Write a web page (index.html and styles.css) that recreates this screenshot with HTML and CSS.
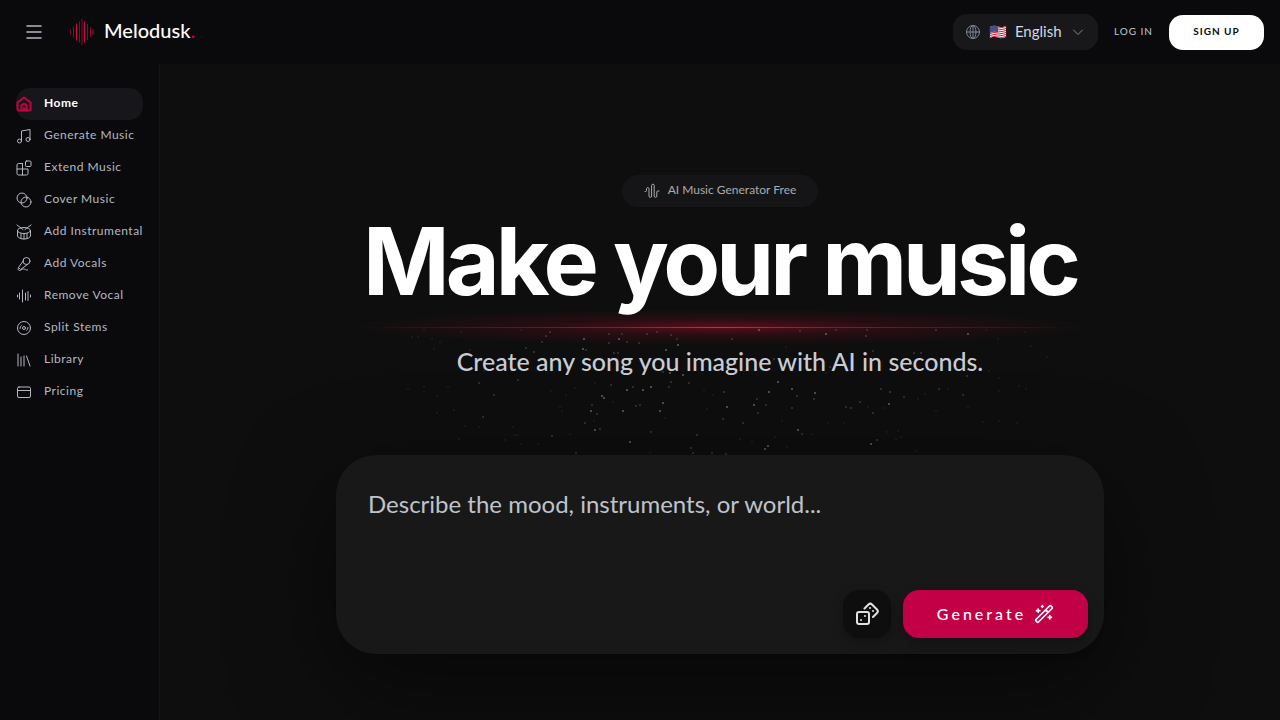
FILE: index.html
```html
<!DOCTYPE html>
<html lang="en">
<head>
    <meta charset="utf-8">
    <meta name="viewport" content="width=device-width, initial-scale=1">
    <title>Melodusk</title>
    <link rel="stylesheet" href="styles.css">
</head>
<body>
<header class="topbar">
    <button class="menu-btn" type="button" aria-label="Menu">
        <svg width="20" height="20" viewBox="0 0 20 20"><path d="M3 4h14M3 10h14M3 16h14"/></svg>
    </button>
    <a class="brand" href="#">
        <svg class="brand-mark" width="24" height="28" viewBox="0 0 24 28">
            <path class="dim" d="M.5 11.5v5M3.500 8.500v11M9.500 3.500v21M12 1v26M17.500 6v16M20.500 9v10"/>
            <path d="M6.500 5.500v17M14.500 3.500v21M23 11.500v5"/>
        </svg>
        <span class="brand-name">Melodusk<span class="dot">.</span></span>
    </a>
    <div class="account">
        <button class="lang" type="button">
            <svg class="globe" width="16" height="16" viewBox="0 0 16 16"><circle cx="8" cy="8" r="6.500"/><ellipse cx="8" cy="8" rx="3" ry="6.500"/><path d="M1.500 8h13M8 1.500v13"/></svg>
            <svg class="flag" width="18" height="14" viewBox="0 0 18 14">
                <path fill="#eee" d="M1 2q4-2 8-.5t8-.5v11q-4 2-8 .5t-8 .5z"/>
                <path fill="none" stroke="#d22f3d" d="M1 2.500q4-2 8-.5t8-.5M1 4.500q4-2 8-.5t8-.5M1 6.500q4-2 8-.5t8-.5M1 8.500q4-2 8-.5t8-.5M1 10.500q4-2 8-.5t8-.5M1 12.500q4-2 8-.5t8-.5"/>
                <path fill="#45508c" d="M1 2q4-2 8-.5v6q-4-1.500-8 .5z"/>
            </svg>
            <span>English</span>
            <svg class="chevron" width="16" height="16" viewBox="0 0 16 16"><path d="M3.500 6l4.500 4.500L12.500 6"/></svg>
        </button>
        <a class="login" href="#">LOG IN</a>
        <button class="signup" type="button">SIGN UP</button>
    </div>
</header>

<div class="shell">
    <nav class="sidebar">
        <a class="item active" href="#">
            <svg viewBox="0 0 16 16"><path d="M1.500 6.500L8 1.500l6.500 5v6a2 2 0 0 1-2 2h-9a2 2 0 0 1-2-2zM5.500 14.500V10A2.500 2.500 0 0 1 8 8a2.500 2.500 0 0 1 2.500 2v4.500M8 12v2.500"/></svg>
            <span>Home</span>
        </a>
        <a class="item" href="#">
            <svg viewBox="0 0 16 16"><circle cx="3.500" cy="13" r="2"/><circle cx="12" cy="11.500" r="2"/><path d="M5.500 13V3l8.500-1.500v10"/></svg>
            <span>Generate Music</span>
        </a>
        <a class="item" href="#">
            <svg viewBox="0 0 16 16"><path d="M6.500 3.500h-4a1.500 1.500 0 0 0-1.500 1.500v8.500A1.500 1.500 0 0 0 2.500 15h8a1.500 1.500 0 0 0 1.500-1.500V9H1M6.500 3.500V15"/><rect x="9.500" y="1" width="5.500" height="5.500" rx="1"/></svg>
            <span>Extend Music</span>
        </a>
        <a class="item" href="#">
            <svg viewBox="0 0 16 16"><circle cx="6" cy="6" r="5"/><circle cx="10" cy="10" r="5"/></svg>
            <span>Cover Music</span>
        </a>
        <a class="item" href="#">
            <svg viewBox="0 0 16 16"><ellipse cx="8" cy="6.500" rx="6.500" ry="3"/><path d="M1.500 6.500v5.500c1 4 12 4 13 0V6.500M5 9.500v5M8 9.500V15M11 9.500v5M1 1l6 4.500M15 1L9 5.500"/></svg>
            <span>Add Instrumental</span>
        </a>
        <a class="item" href="#">
            <svg viewBox="0 0 16 16"><circle cx="10.500" cy="5" r="3.500"/><path d="M7.500 4.500l-5 7 2 2 7-5M2.500 11.500c-1 2 0 3 1 3s2-1.500 4-1.500 2 1.500 4 1"/></svg>
            <span>Add Vocals</span>
        </a>
        <a class="item" href="#">
            <svg viewBox="0 0 16 16"><path d="M1.500 7v2M3.500 5v6M6.500 2v12M9.500 5v7M12 3.500v9M14.500 7v2"/></svg>
            <span>Remove Vocal</span>
        </a>
        <a class="item" href="#">
            <svg viewBox="0 0 16 16"><circle cx="8" cy="8" r="6.500"/><circle cx="8" cy="8" r="1.500"/><path d="M4 8.500q0-2 1.500-3M12 7.500q0 2-1.500 3"/></svg>
            <span>Split Stems</span>
        </a>
        <a class="item" href="#">
            <svg viewBox="0 0 16 16"><path d="M2 2v12M5 5v9M8 4v10M10.500 4l3.500 10"/></svg>
            <span>Library</span>
        </a>
        <a class="item" href="#">
            <svg viewBox="0 0 16 16"><rect x="1.500" y="3" width="13" height="10.500" rx="1.500"/><path d="M1.500 6.500h13"/></svg>
            <span>Pricing</span>
        </a>
    </nav>

    <main class="hero">
        <div class="badge">
            <svg width="16" height="16" viewBox="0 0 16 16"><path d="M1 8.500h.5a1 1 0 0 0 1-1v-2a1.300 1.300 0 0 1 2.500 0v7.500a1.300 1.300 0 0 0 2.600 0V2.500a1.300 1.300 0 0 1 2.600 0v10.500a1.300 1.300 0 0 0 2.600 0V9a1 1 0 0 1 1-1H15"/></svg>
            <span>AI Music Generator Free</span>
        </div>
        <div class="headline">
            <h1>Make your music</h1>
            <div class="beam"></div>
            <svg class="sparkles" width="720" height="150" viewBox="0 0 720 150" aria-hidden="true">
                <path class="bright" d="M259 29h0M224 29h0M223 39h0M306 40h0M318 35h0M257 61h0M310 63h0M323 65h0M291 77h0M283 80h0M267 80h0M242 86h0M244 88h0M231 101h0M263 101h0M303 93h0M300 101h0M399 20h0M466 24h0M608 24h0M418 72h0M432 79h0M455 83h0M409 82h0M529 94h0M394 95h0M367 97h0M438 120h0M405 139h0M408 136h0M270 132h0M511 134h0M235 120h0"/>
                <path class="mid" d="M262 24h0M267 32h0M226 40h0M182 32h0M186 26h0M190 22h0M317 29h0M311 25h0M297 22h0M287 24h0M249 24h0M249 33h0M279 33h0M254 43h0M258 43h0M166 38h0M174 42h0M303 62h0M311 72h0M329 73h0M309 77h0M273 77h0M251 75h0M232 95h0M237 104h0M276 96h0M280 95h0M225 113h0M240 119h0M291 122h0M337 125h0M331 138h0M333 143h0M352 143h0M216 143h0M192 126h0M119 73h0M158 70h0M134 85h0M123 107h0M440 21h0M476 20h0M507 20h0M576 20h0M372 29h0M506 26h0M513 41h0M561 43h0M554 43h0M414 49h0M470 57h0M487 61h0M607 66h0M364 82h0M397 89h0M406 95h0M398 103h0M432 98h0M437 86h0M454 89h0M486 97h0M491 98h0M500 92h0M521 79h0M544 87h0M530 82h0M513 103h0M363 109h0M383 113h0M442 124h0M517 130h0M366 144h0M603 85h0M579 79h0"/>
                <path class="faint" d="M101 22h0M161 20h0M64 19h0M52 27h0M58 27h0M72 29h0M80 32h0M110 40h0M74 39h0M124 61h0M77 86h0M77 103h0M88 77h0M64 77h0M64 82h0M48 79h0M94 100h0M153 117h0M154 125h0M157 125h0M105 116h0M99 129h0M119 117h0M145 130h0M161 134h0M178 134h0M210 124h0M235 73h0M215 78h0M191 81h0M206 85h0M200 97h0M202 101h0M234 111h0M253 92h0M305 108h0M344 80h0M353 85h0M347 99h0M426 37h0M430 54h0M452 124h0M427 137h0M392 132h0M380 129h0M415 127h0M422 111h0M468 113h0M484 113h0M527 122h0M538 121h0M541 127h0M536 129h0M508 97h0M523 98h0M558 89h0M565 84h0M588 79h0M608 106h0M608 97h0M576 101h0M639 68h0M639 81h0M659 76h0M666 79h0M638 29h0M665 22h0M671 36h0M687 47h0M626 20h0M629 61h0M623 112h0M639 111h0M657 113h0M466 63h0M290 143h0M556 141h0"/>
            </svg>
        </div>
        <p class="tagline">Create any song you imagine with AI in seconds.</p>
        <form class="prompt">
            <textarea aria-label="Describe your song" placeholder="Describe the mood, instruments, or world..."></textarea>
            <div class="actions">
                <button class="dice" type="button" aria-label="Random idea">
                    <svg width="24" height="24" viewBox="0 0 24 24"><rect x="2" y="10" width="12" height="12" rx="2"/><path d="M9.500 6.500l4-4a2.500 2.500 0 0 1 3.500 0l5 5a2.500 2.500 0 0 1 0 3.500l-4 4M6 18h.01M10 14h.01M15 6h.01M18 9h.01"/></svg>
                </button>
                <button class="generate" type="button">
                    <span>Generate</span>
                    <svg width="20" height="20" viewBox="0 0 24 24"><path d="M21.640 3.640l-1.280-1.280a1.210 1.210 0 0 0-1.720 0L2.360 18.640a1.210 1.210 0 0 0 0 1.720l1.280 1.280a1.200 1.200 0 0 0 1.720 0L21.640 5.360a1.200 1.200 0 0 0 0-1.720M14 7l3 3M5 6v4M19 14v4M10 2v2M7 8H3M21 16h-4M11 3H9"/></svg>
                </button>
            </div>
        </form>
    </main>
</div>
</body>
</html>
```
FILE: styles.css
```css
* {
    box-sizing: border-box;
}
body {
    margin: 0;
    min-height: 100vh;
    display: flex;
    flex-direction: column;
    background: #0e0e0e;
    color: #fff;
    font-family: Lato, "Noto Sans", sans-serif;
}
a {
    color: inherit;
    text-decoration: none;
}
button {
    border: 0;
    padding: 0;
    font-family: inherit;
    cursor: pointer;
}
svg {
    display: block;
    flex: none;
    fill: none;
    stroke: currentColor;
    stroke-linecap: round;
    stroke-linejoin: round;
}

/* top bar */
.topbar {
    height: 64px;
    padding: 0 16px;
    display: flex;
    align-items: center;
    background: #0a0a0c;
}
.menu-btn {
    width: 36px;
    height: 36px;
    display: flex;
    align-items: center;
    justify-content: center;
    background: none;
    color: #b4b8c2;
}
.menu-btn svg {
    stroke-width: 1.5;
}
.brand {
    margin-left: 18px;
    display: flex;
    align-items: center;
    gap: 10px;
}
.brand-mark {
    color: #d20445;
    stroke-linecap: butt;
}
.brand-mark .dim {
    opacity: .65;
}
.brand-name {
    font-size: 20px;
    line-height: 32px;
    padding-bottom: 4px;
    font-weight: 500;
}
.dot {
    color: #c50045;
}
.account {
    margin-left: auto;
    display: flex;
    align-items: center;
    gap: 16px;
}
.lang {
    width: 145px;
    height: 36px;
    padding: 0 12px;
    display: flex;
    align-items: center;
    gap: 8px;
    border-radius: 14px;
    background: #18181a;
    color: #d5d8e0;
    font-size: 15px;
}
.lang span,
.login,
.signup,
.generate span {
    padding-bottom: 2px;
}
.globe,
.chevron {
    color: #7d8696;
}
.chevron {
    margin-left: auto;
}
.flag {
    stroke: none;
}
.login {
    color: #c5c8d0;
    font-size: 10px;
    letter-spacing: 1px;
}
.signup {
    width: 95px;
    height: 35px;
    border-radius: 14px;
    background: #fff;
    color: #0a0a0c;
    font-size: 10px;
    font-weight: 700;
    letter-spacing: 1px;
}

.shell {
    flex: 1;
    display: flex;
}

/* side navigation */
.sidebar {
    width: 160px;
    padding: 24px 16px;
    flex: none;
    background: #0a0a0c;
    border-right: 1px solid #151517;
}
.item {
    height: 32px;
    display: flex;
    align-items: center;
    gap: 12px;
    border-radius: 14px;
    color: #b5b8c0;
    font-size: 12px;
    letter-spacing: .5px;
    white-space: nowrap;
}
.item span {
    padding-bottom: 4px;
}
.item svg {
    width: 16px;
    height: 16px;
}
.item.active {
    background: #17171b;
    color: #fff;
    font-weight: 700;
}
.item.active svg {
    color: #c50045;
    stroke-width: 2;
}

/* hero */
.hero {
    flex: 1;
    min-width: 0;
    padding: 111px 24px 64px;
    display: flex;
    flex-direction: column;
    align-items: center;
    overflow: hidden;
}
.badge {
    height: 32px;
    padding: 0 22px;
    display: flex;
    align-items: center;
    gap: 8px;
    border-radius: 16px;
    background: #151517;
    color: #aaabae;
    font-size: 12px;
}
.badge span {
    padding-bottom: 4px;
}
.headline {
    position: relative;
    width: 100%;
    max-width: 896px;
    margin-top: 6px;
    padding-bottom: 36px;
}
h1 {
    margin: 0;
    position: relative;
    z-index: 1;
    font-family: Inter, sans-serif;
    font-size: 93px;
    line-height: 96px;
    font-weight: 700;
    letter-spacing: -4px;
    text-align: center;
    white-space: nowrap;
}
.beam {
    position: absolute;
    left: 0;
    right: 0;
    bottom: 0;
    height: 36px;
    background: radial-gradient(ellipse 42% 50% at center, rgba(197, 10, 45, .42), rgba(197, 10, 45, .14) 45%, transparent);
}
.beam::after {
    content: "";
    position: absolute;
    left: 10%;
    right: 10%;
    top: 18px;
    height: 1px;
    background: linear-gradient(90deg, transparent, #a00739 34%, #f5193a 50%, #a00739 66%, transparent);
}
.sparkles {
    position: absolute;
    left: 50%;
    top: 97px;
    margin-left: -360px;
    stroke-width: 1.5;
}
.bright {
    stroke: #a8a8a8;
}
.mid {
    stroke: #5c5c5c;
}
.faint {
    stroke: #2c2c2c;
}
.tagline {
    margin: 0;
    position: relative;
    color: #c8ccd6;
    font-size: 25px;
    line-height: 32px;
    font-weight: 500;
    text-align: center;
}
.prompt {
    position: relative;
    width: 100%;
    max-width: 768px;
    margin-top: 78px;
    padding: 32px 16px 16px 32px;
    border-radius: 40px;
    background: #181818;
    box-shadow: 0 32px 96px rgba(0, 0, 0, .5);
}
.prompt textarea {
    display: block;
    width: 100%;
    height: 103px;
    padding: 0;
    border: 0;
    outline: 0;
    resize: none;
    background: none;
    color: #fff;
    font-family: inherit;
    font-size: 24px;
    line-height: 34px;
}
.prompt textarea::placeholder {
    color: #bfc3cb;
}
.actions {
    display: flex;
    justify-content: flex-end;
    gap: 12px;
}
.dice,
.generate {
    height: 48px;
    display: flex;
    align-items: center;
    justify-content: center;
    border-radius: 16px;
}
.dice {
    width: 48px;
    background: #0e0e0e;
    color: #e2e2e4;
    box-shadow: 0 4px 12px rgba(0, 0, 0, .25);
}
.dice svg,
.generate svg {
    stroke-width: 2;
}
.generate {
    width: 185px;
    gap: 8px;
    background: #c30045;
    color: #fff;
    font-size: 16px;
    font-weight: 500;
    letter-spacing: 3px;
    box-shadow: 0 8px 16px rgba(0, 0, 0, .2);
}
```
